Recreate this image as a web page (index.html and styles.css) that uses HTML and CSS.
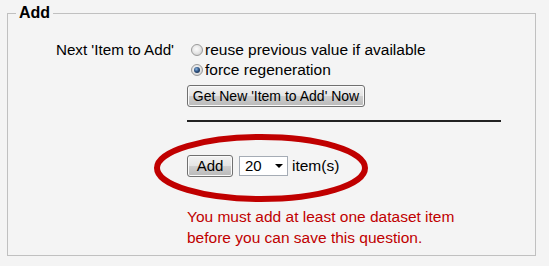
FILE: index.html
```html
<!DOCTYPE html>
<html>
<head>
<meta charset="utf-8">
<link rel="stylesheet" href="styles.css">
</head>
<body>
<fieldset class="panel">
  <legend class="panel-title">Add</legend>
  <div class="row">
    <div class="label">Next 'Item to Add'</div>
    <div class="field">
      <label class="radio"><span class="rb"></span>reuse previous value if available</label>
      <label class="radio"><span class="rb checked"></span>force regeneration</label>
      <button class="btn btn-wide">Get New 'Item to Add' Now</button>
      <div class="rule"></div>
    </div>
  </div>
  <div class="row">
    <div class="label"></div>
    <div class="field">
      <div class="add-line">
        <button class="btn btn-add">Add</button>
        <div class="select"><span>20</span><span class="caret"></span></div>
        <span class="items">item(s)</span>
        <svg class="circle" width="216" height="70" viewBox="0 0 216 70"><ellipse cx="108" cy="35" rx="104" ry="31" fill="none" stroke="#c00000" stroke-width="6"/></svg>
      </div>
      <div class="error">You must add at least one dataset item<br>before you can save this question.</div>
    </div>
  </div>
</fieldset>
</body>
</html>
```
FILE: styles.css
```css
html, body { margin: 0; padding: 0; }
body {
  background: #f4f4f4;
  font-family: "Liberation Sans", Arial, sans-serif;
  font-size: 15.5px;
  color: #000;
  width: 549px;
  height: 266px;
  overflow: hidden;
}
.panel {
  margin: 5px 13px 0 7px;
  padding: 0 0 6px 0;
  border: 1px solid #c0c0c0;
  height: 251px;
  box-sizing: border-box;
}
.panel-title {
  margin-left: 8px;
  padding: 0 3px;
  font-weight: bold;
  font-size: 16px;
  line-height: 16px;
}
.row {
  display: grid;
  grid-template-columns: 166px 1fr;
  column-gap: 13px;
}
.row:first-of-type { margin-top: 19px; }
.label {
  text-align: right;
  line-height: 20px;
  font-size: 15.2px;
}
.field { display: flex; flex-direction: column; align-items: flex-start; }
.radio { display: flex; align-items: center; line-height: 20px; }
.rb {
  width: 10px; height: 10px;
  border-radius: 50%;
  border: 1px solid #9a9a9a;
  background: radial-gradient(circle at 45% 40%, #fbfbfb 0%, #e8e8e8 45%, #c4c4c4 100%);
  margin: 0 2px 0 4px;
  box-sizing: content-box;
  position: relative;
}
.rb.checked::after {
  content: "";
  position: absolute;
  left: 2px; top: 2px;
  width: 6px; height: 6px;
  border-radius: 50%;
  background: radial-gradient(circle at 40% 35%, #8ab4e0 0%, #2f5584 45%, #0b1830 100%);
}
.btn {
  font-family: "Liberation Sans", Arial, sans-serif;
  font-size: 14px;
  color: #000;
  border: 1px solid #707070;
  border-radius: 3px;
  background: linear-gradient(#f2f2f2 0%, #e4e4e4 50%, #cfcfcf 51%, #b9b9b9 100%);
  padding: 0;
  height: 22px;
  line-height: 20px;
  box-shadow: inset 0 0 0 1px #fafafa;
}
.btn-wide { width: 178px; margin-top: 5px; }
.rule {
  width: 314px;
  border-top: 2px solid #222;
  margin-top: 13px;
}
.row + .row { margin-top: 33px; }
.add-line {
  display: flex;
  align-items: center;
  gap: 6px;
  position: relative;
}
.btn-add { width: 46px; font-size: 15px; }
.select {
  height: 18px;
  border: 1px solid #a5acb5;
  background: #fff;
  display: flex;
  align-items: center;
  justify-content: space-between;
  padding: 0 4px 0 5px;
  box-sizing: content-box;
  width: 38px;
  line-height: 18px;
  font-size: 15px;
}
.caret {
  width: 0; height: 0;
  border-left: 4px solid transparent;
  border-right: 4px solid transparent;
  border-top: 4px solid #000;
}
.items { margin-left: -2px; font-size: 15.5px; }
.circle {
  position: absolute;
  left: -34px;
  top: -22px;
}
.error {
  color: #c00000;
  margin-top: 29px;
  line-height: 21px;
  font-size: 15.5px;
}
```
